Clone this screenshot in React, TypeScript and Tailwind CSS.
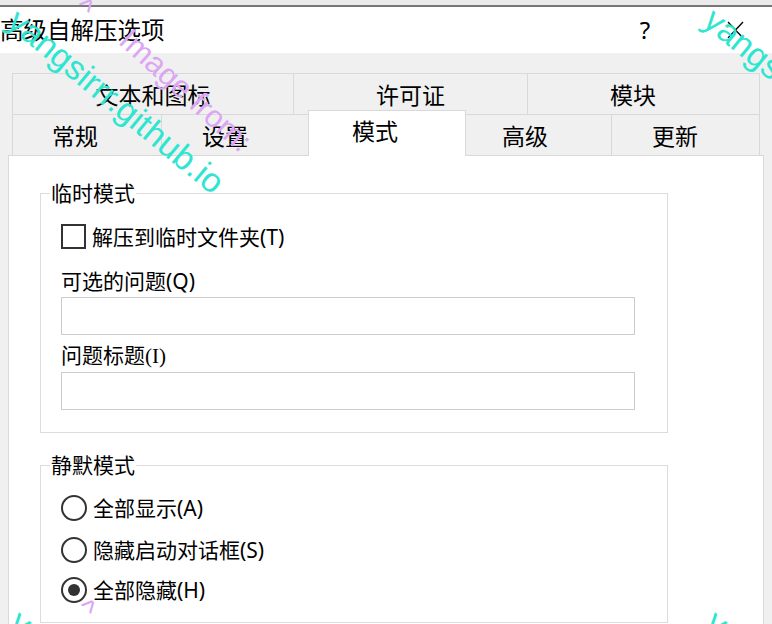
import React from 'react';

const FONT = { fontFamily: '"Noto Sans", "Noto Sans CJK SC", sans-serif' };

type Tab = { label: string; w: string; edge: string; pad: string; active?: boolean };

const topRow: Tab[] = [
  { label: '文本和图标', w: 'w-[281px]', edge: 'border-l border-t', pad: 'justify-center' },
  { label: '许可证', w: 'w-[234px]', edge: 'border-l border-t', pad: 'justify-center' },
  { label: '模块', w: 'w-[233px]', edge: 'border-l border-t border-r', pad: 'pl-[82px]' },
];

const bottomRow: Tab[] = [
  { label: '常规', w: 'w-[149px]', edge: 'border-l border-t', pad: 'pl-[39px]' },
  { label: '设置', w: 'w-[147px]', edge: 'border-l border-t', pad: 'pl-[40px]' },
  { label: '模式', w: 'w-[158px]', edge: 'border-l border-t border-r', pad: 'pl-[43px]', active: true },
  { label: '高级', w: 'w-[145px]', edge: 'border-t', pad: 'pl-[36px]' },
  { label: '更新', w: 'w-[149px]', edge: 'border-l border-t border-r', pad: 'pl-[40px]' },
];

function TabButton({ tab }: { tab: Tab }) {
  if (tab.active) {
    return (
      <div
        className={`${tab.w} ${tab.edge} ${tab.pad} relative z-10 -mt-[4px] h-[46px] self-start border-[#d9d9d9] bg-white flex items-center pb-[5px] text-[23px] leading-[30px] text-black`}
      >
        {tab.label}
      </div>
    );
  }
  return (
    <div
      className={`${tab.w} ${tab.edge} ${tab.pad} h-[41px] border-[#d9d9d9] bg-[#f0f0f0] flex items-center pt-[2px] text-[23px] leading-[30px] text-black`}
    >
      {tab.label}
    </div>
  );
}

function Radio({ label, checked }: { label: string; checked?: boolean }) {
  return (
    <div className="flex items-center h-[26px]">
      <span className="w-[26px] h-[26px] rounded-full border-2 border-[#333333] bg-white flex items-center justify-center shrink-0">
        {checked && <span className="w-[12px] h-[12px] rounded-full bg-[#333333]" />}
      </span>
      <span className="ml-[6px] text-[21px] leading-[26px] text-black">{label}</span>
    </div>
  );
}

// diagonal watermark of the source site, repeated as a tile
function Watermark({ dx, dy }: { dx: number; dy: number }) {
  return (
    <>
      <span
        className="absolute origin-top-left rotate-[39.5deg] whitespace-nowrap text-[34px] leading-[39px] text-[#2ee6d0]"
        style={{ left: 25 + dx, top: 1 + dy, fontFamily: '"Liberation Sans", Arial, sans-serif' }}
      >
        yangsirrr.github.io
      </span>
      <span
        className="absolute origin-top-left rotate-[42deg] whitespace-nowrap text-[30px] leading-[34px] text-[#dba6f3]"
        style={{ left: 90 + dx, top: -9 + dy, fontFamily: '"Liberation Sans", Arial, sans-serif' }}
      >
        ^
      </span>
      <span
        className="absolute origin-top-left rotate-[42deg] whitespace-nowrap text-[31px] leading-[36px] text-[#dba6f3]"
        style={{ left: 136 + dx, top: 22 + dy, fontFamily: '"Liberation Sans", Arial, sans-serif' }}
      >
        Image from:
      </span>
    </>
  );
}

export default function App() {
  return (
    <div className="relative w-[772px] h-[624px] overflow-hidden bg-[#f0f0f0] flex flex-col" style={FONT}>
      {/* window behind */}
      <div className="h-[5px] bg-[#ebebeb] shrink-0" />
      <div className="h-[2px] bg-[#777777] shrink-0" />

      {/* Title bar */}
      <div className="h-[46px] bg-white flex items-center shrink-0 pr-[22px]">
        <span className="flex-1 text-[23.5px] leading-[30px] text-black">高级自解压选项</span>
        <span className="w-[30px] text-center text-[24px] leading-[30px] text-black">?</span>
        <span className="w-[30px] ml-[60px] flex items-center justify-center">
          <svg width="17" height="18" viewBox="0 0 17 18" fill="none" stroke="#000" strokeWidth="1.3">
            <path d="M1 1 L16 17 M16 1 L1 17" />
          </svg>
        </span>
      </div>

      {/* Tabs */}
      <div className="pt-[20px] pl-[12px] flex flex-col shrink-0">
        <div className="flex">
          {topRow.map((t) => (
            <TabButton key={t.label} tab={t} />
          ))}
        </div>
        <div className="flex h-[41px]">
          {bottomRow.map((t) => (
            <TabButton key={t.label} tab={t} />
          ))}
        </div>
      </div>

      {/* Page */}
      <div className="ml-[8px] w-[756px] flex-1 bg-white border-l border-r border-t border-[#d9d9d9] pl-[31px]">
        <fieldset className="mt-[24px] w-[628px] border border-[#dcdcdc]">
          <legend className="ml-[9px] px-[1px] text-[21px] leading-[26px] text-black">临时模式</legend>
          <div className="pl-[20px] pt-[18px] pb-[22px]">
            <div className="flex items-center h-[25px]">
              <span className="w-[25px] h-[25px] border-2 border-[#333333] bg-white shrink-0" />
              <span className="ml-[6px] text-[21px] leading-[26px] text-black">解压到临时文件夹(T)</span>
            </div>
            <div className="mt-[19px] text-[21px] leading-[26px] text-black">可选的问题(Q)</div>
            <div className="mt-[3px] w-[574px] h-[38px] border border-[#cccccc] bg-white" />
            <div className="mt-[7px] text-[21px] leading-[26px] text-black">
              问题标题<span style={{ fontFamily: '"Liberation Serif", serif' }}>(I)</span>
            </div>
            <div className="mt-[3px] w-[574px] h-[38px] border border-[#cccccc] bg-white" />
          </div>
        </fieldset>

        <fieldset className="mt-[19px] w-[628px] border border-[#dcdcdc]">
          <legend className="ml-[9px] px-[1px] text-[21px] leading-[26px] text-black">静默模式</legend>
          <div className="pl-[20px] pt-[17px] pb-[19px]">
            <Radio label="全部显示(A)" />
            <div className="mt-[16px]">
              <Radio label="隐藏启动对话框(S)" />
            </div>
            <div className="mt-[14px]">
              <Radio label="全部隐藏(H)" checked />
            </div>
          </div>
        </fieldset>
      </div>

      {/* watermark overlay */}
      <div className="pointer-events-none absolute inset-0 z-20">
        <Watermark dx={0} dy={0} />
        <Watermark dx={696} dy={-1} />
        <Watermark dx={2} dy={601} />
        <Watermark dx={698} dy={601} />
      </div>
    </div>
  );
}
